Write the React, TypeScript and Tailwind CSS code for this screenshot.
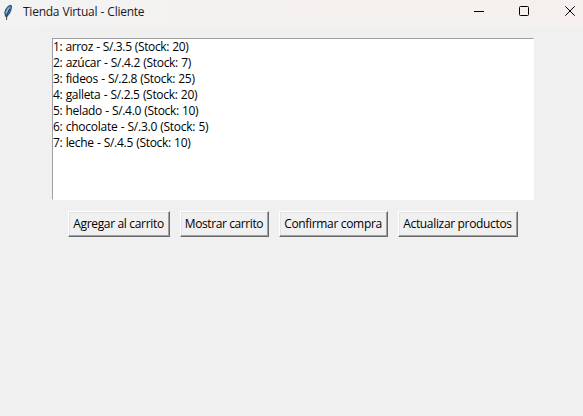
const products = [
  { text: '1: arroz - S/.3.5 (Stock: 20)', spacing: 'tracking-[-0.36px] [word-spacing:0.4px]' },
  { text: '2: azúcar - S/.4.2 (Stock: 7)', spacing: 'tracking-[-0.3px] [word-spacing:0.4px]' },
  { text: '3: fideos - S/.2.8 (Stock: 25)', spacing: 'tracking-[-0.3px] [word-spacing:0.4px]' },
  { text: '4: galleta - S/.2.5 (Stock: 20)', spacing: 'tracking-[-0.3px] [word-spacing:0.4px]' },
  { text: '5: helado - S/.4.0 (Stock: 10)', spacing: 'tracking-[-0.32px] [word-spacing:0.4px]' },
  { text: '6: chocolate - S/.3.0 (Stock: 5)', spacing: 'tracking-[-0.26px] [word-spacing:0.4px]' },
  { text: '7: leche - S/.4.5 (Stock: 10)', spacing: 'tracking-[-0.3px] [word-spacing:0.4px]' },
];

const actions = [
  { label: 'Agregar al carrito', style: 'w-[102px] tracking-[-0.33px]' },
  { label: 'Mostrar carrito', style: 'w-[89px] tracking-[-0.4px]' },
  { label: 'Confirmar compra', style: 'w-[109px] tracking-[-0.33px]' },
  { label: 'Actualizar productos', style: 'w-[120px] tracking-[-0.33px]' },
];

function Feather() {
  return (
    <svg width="16" height="20" viewBox="0 0 16 20" className="shrink-0">
      <path d="M5.5 14.3 4.8 10.5 6 7 8.2 4.2 11 3.2 11.5 5 10.5 9.5 8.7 12.7 6.7 14.6Z" fill="#4a8ad0" stroke="#2b303b" strokeWidth="0.9" />
      <path d="M5.9 10.5 8 6.2 9.7 4.7 8.4 8.4 6.3 12.2Z" fill="#86bdf5" />
      <path d="M9.6 7 6.9 13 6.5 18" fill="none" stroke="#15171c" strokeWidth="0.8" />
    </svg>
  );
}

function TitleBar() {
  return (
    <header className="flex h-[27px] items-start bg-gradient-to-r from-[#f3f3f3] to-[#f5f0ed]">
      <div className="flex h-6 flex-1 items-center">
        <Feather />
        <h1 className="ml-[7px] whitespace-nowrap tracking-[-0.25px] text-[#1a1a1a] [word-spacing:0.4px]">Tienda Virtual - Cliente</h1>
      </div>
      <svg width="113" height="24" viewBox="470 0 113 24" fill="none" stroke="#000">
        <path d="M474 11.5H484" />
        <rect x="519.5" y="6.5" width="9" height="9" rx="1" />
        <path d="m565.3 6.3 9.4 9.4m0-9.4-9.4 9.4" />
      </svg>
    </header>
  );
}

export default function App() {
  return (
    <div className="h-[416px] w-[583px] overflow-hidden bg-[#f0f0f0] font-['Open_Sans','Noto_Sans',sans-serif] text-[12px] leading-4 text-black">
      <TitleBar />
      <main className="flex flex-col pt-[11px]">
        <ul className="ml-[52px] h-[162px] w-[482px] border border-t-[#a0a0a0] border-r-white border-b-white border-l-[#a0a0a0] bg-white">
          {products.map((product) => (
            <li key={product.text} className={`h-4 whitespace-nowrap ${product.spacing}`}>{product.text}</li>
          ))}
        </ul>
        <div className="mt-[11px] ml-[68px] flex gap-[10px]">
          {actions.map((action) => (
            <button
              key={action.label}
              className={`flex h-[26px] items-center justify-center border border-t-white border-r-[#696969] border-b-[#696969] border-l-white pr-px whitespace-nowrap shadow-[inset_-1px_-1px_0_#a0a0a0,inset_1px_1px_0_#e3e3e3] ${action.style}`}
            >
              {action.label}
            </button>
          ))}
        </div>
      </main>
    </div>
  );
}
